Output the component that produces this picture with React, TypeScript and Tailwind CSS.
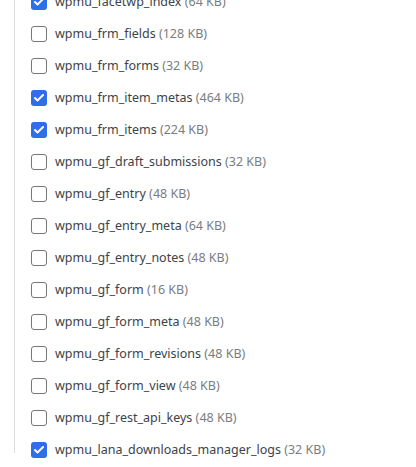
import { Check } from 'lucide-react';

interface TableRow {
  name: string;
  size: string;
  checked: boolean;
}

const rows: TableRow[] = [
  { name: 'wpmu_facetwp_index', size: '64 KB', checked: true },
  { name: 'wpmu_frm_fields', size: '128 KB', checked: false },
  { name: 'wpmu_frm_forms', size: '32 KB', checked: false },
  { name: 'wpmu_frm_item_metas', size: '464 KB', checked: true },
  { name: 'wpmu_frm_items', size: '224 KB', checked: true },
  { name: 'wpmu_gf_draft_submissions', size: '32 KB', checked: false },
  { name: 'wpmu_gf_entry', size: '48 KB', checked: false },
  { name: 'wpmu_gf_entry_meta', size: '64 KB', checked: false },
  { name: 'wpmu_gf_entry_notes', size: '48 KB', checked: false },
  { name: 'wpmu_gf_form', size: '16 KB', checked: false },
  { name: 'wpmu_gf_form_meta', size: '48 KB', checked: false },
  { name: 'wpmu_gf_form_revisions', size: '48 KB', checked: false },
  { name: 'wpmu_gf_form_view', size: '48 KB', checked: false },
  { name: 'wpmu_gf_rest_api_keys', size: '48 KB', checked: false },
  { name: 'wpmu_lana_downloads_manager_logs', size: '32 KB', checked: true },
];

export default function App() {
  return (
    <div className="h-[467px] overflow-hidden bg-white pl-[14px] font-['Noto_Sans',sans-serif]">
      <div className="h-full border-l border-[#dcdcde] pl-4">
        <div className="-mt-[14px] flex flex-col">
          {rows.map((row) => (
            <label key={row.name} className="flex h-8 items-center gap-2">
              <span
                className={
                  row.checked
                    ? 'flex h-4 w-4 items-center justify-center rounded-[3px] bg-[#2c6fe8]'
                    : 'h-4 w-4 rounded-[3px] border border-[#767676] bg-white'
                }
              >
                {row.checked && <Check className="h-3 w-3 text-white" strokeWidth={4} />}
              </span>
              <span className="text-[12.5px] text-[#3c434a]">
                {row.name} <span className="text-[#7a7d82]">({row.size})</span>
              </span>
            </label>
          ))}
        </div>
      </div>
    </div>
  );
}
